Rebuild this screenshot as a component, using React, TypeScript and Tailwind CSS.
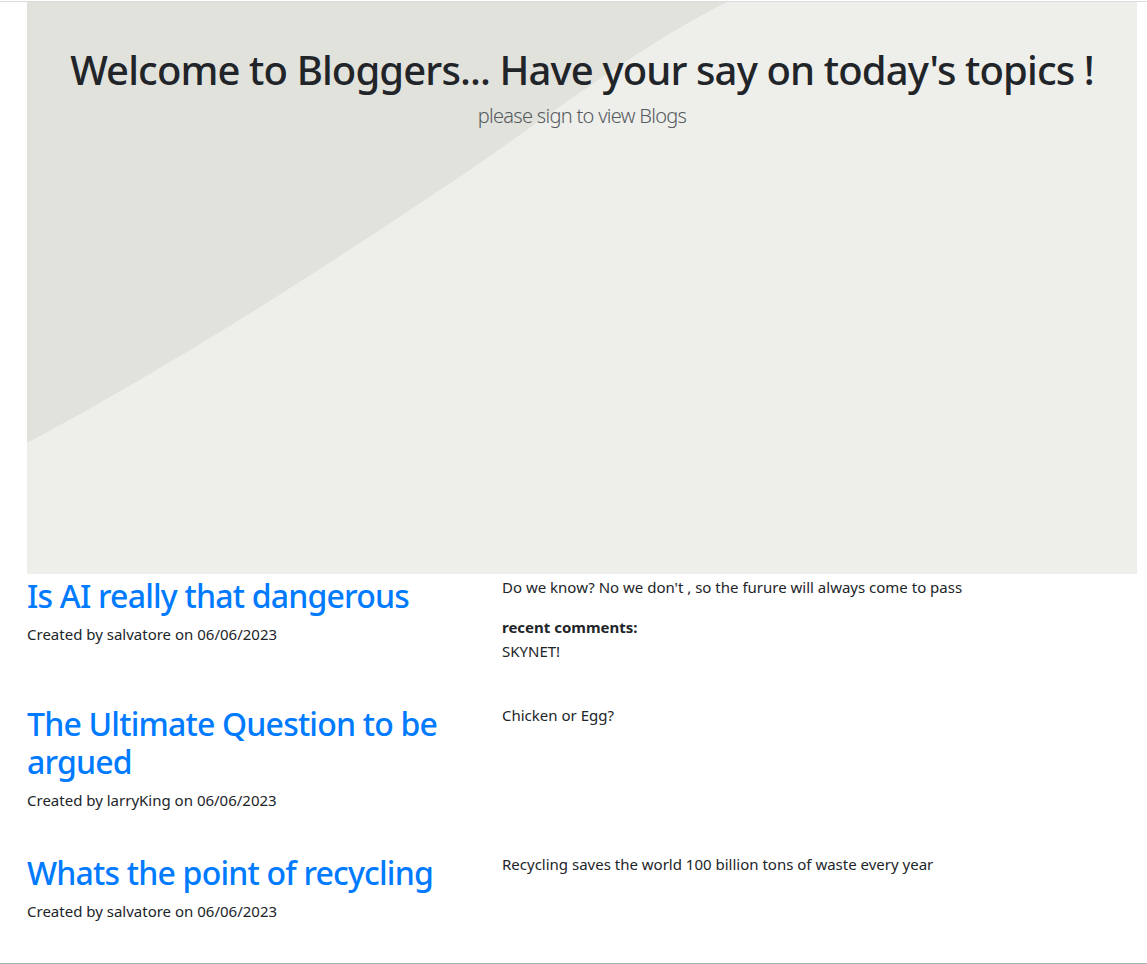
import React from "react";

type Blog = {
  title: string;
  author: string;
  date: string;
  body: string;
  comments?: string[];
};

const blogs: Blog[] = [
  {
    title: "Is AI really that dangerous",
    author: "salvatore",
    date: "06/06/2023",
    body: "Do we know? No we don't , so the furure will always come to pass",
    comments: ["SKYNET!"],
  },
  {
    title: "The Ultimate Question to be argued",
    author: "larryKing",
    date: "06/06/2023",
    body: "Chicken or Egg?",
  },
  {
    title: "Whats the point of recycling",
    author: "salvatore",
    date: "06/06/2023",
    body: "Recycling saves the world 100 billion tons of waste every year",
  },
];

const Hero: React.FC = () => (
  <section className="relative h-[572px] overflow-hidden bg-[#eeeeea]">
    {/* background wave */}
    <svg
      className="absolute inset-0 h-full w-full"
      viewBox="0 0 1110 572"
      preserveAspectRatio="none"
    >
      <path
        d="M0 0 H700 C620 40 540 100 440 170 C320 250 170 350 0 441 Z"
        fill="#e1e2db"
      />
    </svg>
    <div className="relative pt-[44px] text-center">
      <h1 className="mb-[7px] text-[40px] leading-[48px] font-medium tracking-[-0.87px] text-[#212529]">
        Welcome to Bloggers... Have your say on today's topics !
      </h1>
      <p className="text-[20px] leading-[30px] font-light tracking-[-0.7px] text-[#555a5f]">
        please sign to view Blogs
      </p>
    </div>
  </section>
);

const BlogRow: React.FC<{ blog: Blog }> = ({ blog }) => (
  <article className="flex pb-10">
    <div className="w-[445px] shrink-0 pt-[2px]">
      <h2 className="mb-[7px] text-[32px] leading-[38px] font-medium tracking-[-0.8px] text-[#007bff]">
        {blog.title}
      </h2>
      <p className="text-[15px] leading-6 text-[#212529]">
        Created by {blog.author} on {blog.date}
      </p>
    </div>
    <div className="ml-[30px] flex-1 text-[15px] leading-6 text-[#212529]">
      <p>{blog.body}</p>
      {blog.comments && (
        <div className="mt-4">
          <p className="font-bold">recent comments:</p>
          {blog.comments.map((c, i) => (
            <p key={i}>{c}</p>
          ))}
        </div>
      )}
    </div>
  </article>
);

export default function App() {
  return (
    <div className="min-h-[964px] bg-white pt-px font-['Noto_Sans',sans-serif]">
      <div className="border-t border-[#dcdcdc]">
        <div className="ml-[27px] w-[1110px]">
          <Hero />
          <div className="pt-px">
            {blogs.map((b) => (
              <BlogRow key={b.title} blog={b} />
            ))}
          </div>
        </div>
      </div>
      <div className="border-t border-[#a9b4b6]" />
    </div>
  );
}
